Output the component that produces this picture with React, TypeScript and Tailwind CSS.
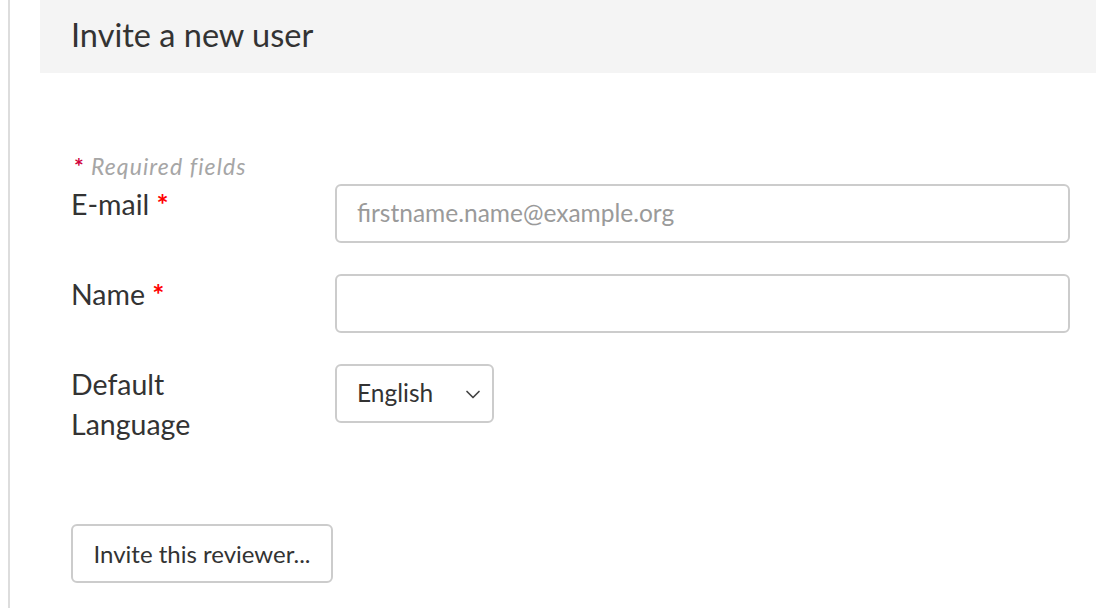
import React from "react";

export default function App() {
  const font = { fontFamily: "Lato, 'Noto Sans', sans-serif" };
  return (
    <div className="w-[1096px] h-[608px] bg-white overflow-hidden flex" style={font}>
      <div className="ml-[8px] w-[2px] bg-[#dddddd] shrink-0" />
      <div className="ml-[30px] flex-1 flex flex-col">
        <div className="h-[73px] bg-[#f4f4f4] pl-[31px] flex items-center">
          <h1 className="text-[32.5px] text-[#333333] leading-none pb-[2px]">Invite a new user</h1>
        </div>
        <div className="pl-[31px] pr-[26px] flex flex-col">
          <div className="mt-[79px] h-[28px] flex items-center text-[23px] italic text-[#a6a6a6] tracking-[1.1px]">
            <span className="text-[#d0003c] not-italic font-bold mr-[6px] ml-[3px]">*</span>
            <span>Required fields</span>
          </div>
          <div className="mt-[4px] flex">
            <label className="w-[264px] shrink-0 text-[28.5px] leading-[40px] text-[#333333]">
              E-mail <span className="text-[#ff0000] font-bold">*</span>
            </label>
            <div className="flex-1 h-[59px] border-2 border-[#cccccc] rounded-[6px] flex items-center pl-[20px] text-[24.5px] text-[#9a9a9a]">
              firstname.name@example.org
            </div>
          </div>
          <div className="mt-[31px] flex">
            <label className="w-[264px] shrink-0 text-[28.5px] leading-[40px] text-[#333333]">
              Name <span className="text-[#ff0000] font-bold">*</span>
            </label>
            <div className="flex-1 h-[59px] border-2 border-[#cccccc] rounded-[6px]" />
          </div>
          <div className="mt-[31px] flex">
            <label className="w-[264px] shrink-0 text-[28.5px] leading-[40px] text-[#333333]">
              Default<br />Language
            </label>
            <div className="w-[159px] h-[59px] border-2 border-[#cccccc] rounded-[6px] flex items-center pl-[20px] pr-[9px] justify-between text-[24.5px] text-[#333333]">
              <span>English</span>
              <svg width="20" height="20" viewBox="0 0 20 20" fill="none" stroke="#444" strokeWidth="1.7" strokeLinecap="round" strokeLinejoin="round">
                <path d="M4 7.5l6 6 6-6" />
              </svg>
            </div>
          </div>
          <div className="mt-[80px]">
            <button className="w-[262px] h-[59px] border-2 border-[#cccccc] rounded-[6px] bg-white text-[24px] text-[#333333] flex items-center justify-center">
              Invite this reviewer...
            </button>
          </div>
        </div>
      </div>
    </div>
  );
}
